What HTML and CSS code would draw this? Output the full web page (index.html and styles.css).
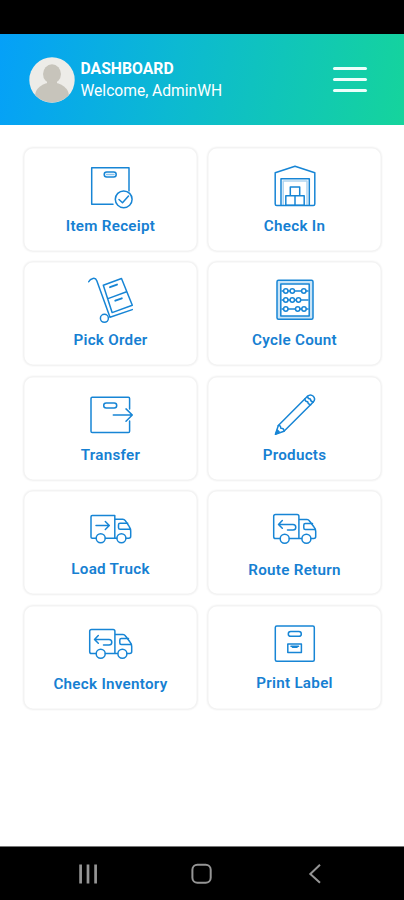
FILE: index.html
```html
<!DOCTYPE html>
<html lang="en">
<head>
<meta charset="utf-8">
<meta name="viewport" content="width=device-width, initial-scale=1">
<title>Dashboard</title>
<link rel="stylesheet" href="styles.css">
</head>
<body>
<div class="status-bar"></div>
<header class="header">
  <svg class="avatar" viewBox="0 0 46 46">
    <defs><clipPath id="face"><circle cx="23" cy="23" r="22.5"/></clipPath></defs>
    <circle cx="23" cy="23" r="22.7" fill="#edece8"/>
    <g fill="#c7c4bb" clip-path="url(#face)"><ellipse cx="23" cy="17" rx="9" ry="9.7"/><path d="M18 22h10v6H18z"/><ellipse cx="23" cy="39" rx="17" ry="13.5"/></g>
  </svg>
  <div class="user">
    <h1 class="title">DASHBOARD</h1>
    <p class="welcome">Welcome, AdminWH</p>
  </div>
  <div class="menu"><span></span><span></span><span></span></div>
</header>
<main class="grid">
  <a class="card">
    <svg class="icon" viewBox="0 0 49 50"><path d="M43 30V6.8H5.7v36.5H27"/><rect x="18.2" y="11" width="12" height="5" rx="2.5"/><path d="M20.5 13.5h7.5" opacity=".5"/><circle cx="37.7" cy="38.3" r="8.4"/><path d="m33 38.5 3.5 3.2 6-6.7"/></svg>
    <span class="label">Item Receipt</span>
  </a>
  <a class="card">
    <svg class="icon" viewBox="0 0 49 50"><path d="M5.2 43V11.8L25 5.2l19.8 6.6V43q0 1.5-1.5 1.5H6.7q-1.5 0-1.5-1.5z"/><path d="M11 44V17.7h28.3V44"/><path d="M13.2 44V20H37v24" opacity=".35"/><path d="M20.3 26h9.4v8.8h-9.4zM15.8 34.8h18.4v9.5H15.8zM25 34.8v9.5"/></svg>
    <span class="label">Check In</span>
  </a>
  <a class="card">
    <svg class="icon" viewBox="0 0 49 50"><path d="M2.7 6.8Q4 4 7 3.4q2.7-.6 3.8 2.3L24 42.2l22.3-7.6"/><circle cx="18.4" cy="43.3" r="4"/><path d="m17.3 10.3 18.2-6.8 10.8 26.8-20.2 7.3zM22 23.6l18.6-6.8"/><path d="m24 12.2 7-2.6M29.3 25.7l6.5-2.4" stroke-width="1.9"/></svg>
    <span class="label">Pick Order</span>
  </a>
  <a class="card">
    <svg class="icon" viewBox="0 0 49 50"><rect x="7" y="5.3" width="36" height="39" rx="1.5" fill="#c9e4f7"/><rect x="10.8" y="9" width="28.4" height="32" fill="#fff"/><path d="M12 16h26M12 25h26M12 34h26"/><g fill="#fff"><circle cx="15.8" cy="16" r="2.2"/><circle cx="22.3" cy="16" r="2.2"/><circle cx="33.8" cy="16" r="2.2"/><circle cx="15.8" cy="25" r="2.2"/><circle cx="22.3" cy="25" r="2.2"/><circle cx="28.5" cy="25" r="2.2"/><circle cx="15.8" cy="34" r="2.2"/><circle cx="27.7" cy="34" r="2.2"/><circle cx="34" cy="34" r="2.2"/></g></svg>
    <span class="label">Cycle Count</span>
  </a>
  <a class="card">
    <svg class="icon" viewBox="0 0 49 50"><path d="M43.6 19V8.5q0-1.2-1.2-1.2H6.2Q5 7.3 5 8.5v32.7q0 1.3 1.2 1.3h36.2q1.2 0 1.2-1.3V31"/><rect x="17.7" y="13" width="13" height="5" rx="2.5"/><path d="M27.3 25h19M40 18.9l6.3 6.1-6.3 6.2"/></svg>
    <span class="label">Transfer</span>
  </a>
  <a class="card">
    <svg class="icon" viewBox="0 0 49 50"><path d="M5.5 44.2 8.3 35.5 37.5 6.3Q40.5 3.7 43.3 6.3q2.6 2.8 0 5.7L14 41.3z"/><path d="M8.3 35.5q2.5-.3 2.5 2.8 3.3-.3 3.2 3M34.8 9q.2 2.5 2.9 2.8.2 2.7 2.9 3M37.5 6.3q.3 2.5 2.9 2.8.2 2.6 2.9 2.9M5.5 44.2l3.6-2.5-1.8-1.7z"/></svg>
    <span class="label">Products</span>
  </a>
  <a class="card">
    <svg class="icon" viewBox="0 0 49 50"><path d="M10 34.2H6.2Q5 34.2 5 33V12.7q0-1.2 1.2-1.2h22.6v22.7H19.4M28.8 15.2h8q1.5 0 2.5 1.5l4 6q1.4 2 1.4 4.5v5q0 2-2 2h-2.6M28.8 34.2h2"/><path d="M41.7 19.3H34q-1.5 0-1.5 1.5v3q0 1.5 1.5 1.5h10"/><circle cx="14.7" cy="34.2" r="4.5"/><circle cx="35.4" cy="34.2" r="4.5"/><path d="M10 21.5h13.2M19.3 17.5l4 4-4 4"/></svg>
    <span class="label">Load Truck</span>
  </a>
  <a class="card">
    <svg class="icon" viewBox="0 0 49 50"><g id="return-truck"><path d="M10 34.5H5.5q-1.8 0-1.8-1.8V12.2q0-1.8 1.8-1.8h21.6q1.8 0 1.8 1.8v22.3h-9.5M29 15.5h8q1.5 0 2.5 1.5l4.5 6q1.7 2 1.7 4.5v5q0 2-2 2h-2.6M29 34.5h2.5"/><path d="M42.5 19.5h-7.2q-1.5 0-1.5 1.5v3q0 1.5 1.5 1.5h10"/><circle cx="14.7" cy="34.7" r="4.5"/><circle cx="36.4" cy="34.7" r="4.5"/><path d="m12.3 16.5-3.8 4 3.8 3.8M9 20.5h14q2.8 0 2.8 2.8t-2.8 2.8h-5.5"/></g></svg>
    <span class="label low">Route Return</span>
  </a>
  <a class="card">
    <svg class="icon" viewBox="0 0 49 50"><use href="#return-truck"/></svg>
    <span class="label">Check Inventory</span>
  </a>
  <a class="card">
    <svg class="icon" viewBox="0 0 49 50"><rect x="5.3" y="7" width="39" height="35.3" rx="1.5"/><rect x="18.3" y="12.5" width="13" height="4.8" rx="2.4"/><path d="M17.8 25h13.6v8.5H17.8z"/><path d="M21 27.2h7.5M22.5 28.2h4.5" stroke-width="1.6"/></svg>
    <span class="label high">Print Label</span>
  </a>
</main>
<nav class="nav-bar">
  <svg viewBox="0 0 24 24"><path d="M4.6 2.5v19M12 2.5v19M19.6 2.5v19" stroke-width="2.7"/></svg>
  <svg viewBox="0 0 24 24"><rect x="2.4" y="2.7" width="18.3" height="18" rx="5"/></svg>
  <svg viewBox="0 0 24 24"><path d="m17 2.7-9.7 9.2 9.7 8.8"/></svg>
</nav>
</body>
</html>
```

FILE: styles.css
```css
* { box-sizing: border-box; }

body {
  margin: 0;
  height: 900px;
  display: flex;
  flex-direction: column;
  overflow: hidden;
  background: #fff;
  font-family: Roboto, "Liberation Sans", sans-serif;
}

.status-bar { height: 34px; background: #000; }

.header {
  height: 91px;
  padding: 0 37px 0 29px;
  display: flex;
  align-items: center;
  color: #fff;
  background: linear-gradient(100deg, #05a0f8 0%, #0cb9d2 43%, #15d49c 100%);
}

.avatar { width: 46px; height: 46px; }

.user { margin: 1px 0 0 5.5px; flex: 1; }

.title, .welcome { margin: 0; line-height: 22px; white-space: nowrap; }

.title { font-size: 15.75px; font-weight: 700; }

.welcome { font-size: 15.6px; font-weight: 400; }

.menu { width: 34px; display: grid; gap: 8px; }

.menu span { height: 3px; border-radius: 2px; background: #edfffb; }

.grid {
  flex: 1;
  padding: 22px 22px 0 23px;
  display: grid;
  grid-template-columns: 175px 175px;
  grid-auto-rows: 105px;
  align-content: start;
  gap: 9.4px 9px;
}

.card {
  padding-top: 14px;
  display: flex;
  flex-direction: column;
  align-items: center;
  border-radius: 10px;
  background: #fff;
  box-shadow: inset 0 0 0 1.5px #f3f3f3, 0 0 2px #eee;
}

.icon {
  width: 49px;
  height: 50px;
  flex: none;
  fill: none;
  stroke: #1785d5;
  stroke-width: 1.5;
  stroke-linecap: round;
  stroke-linejoin: round;
}

.label {
  margin-top: 5px;
  font-size: 15.2px;
  font-weight: 600;
  letter-spacing: 0.28px;
  line-height: 20px;
  color: #1680d2;
}

.low { margin-top: 6px; }

.high { margin-top: 4px; }

.nav-bar {
  height: 54px;
  padding: 0 77px 0 76px;
  display: flex;
  align-items: center;
  justify-content: space-between;
  border-top: 1px solid #777;
  background: #000;
}

.nav-bar svg { width: 24px; height: 24px; fill: none; stroke: #959595; stroke-width: 2; }
```
